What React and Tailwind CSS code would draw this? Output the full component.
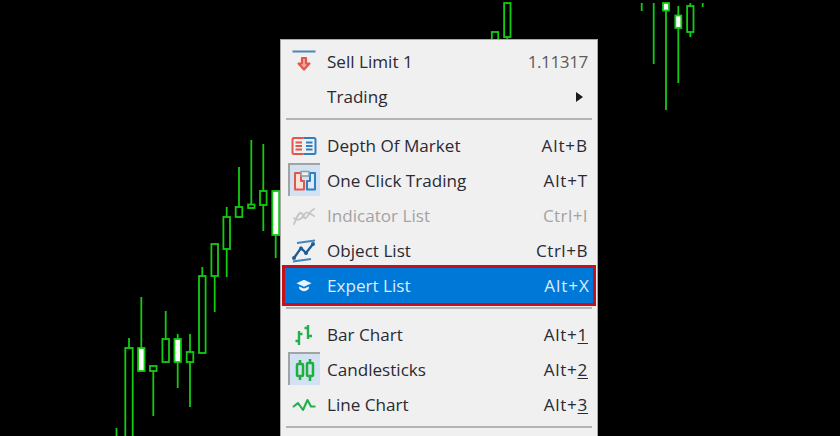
const GREEN = "#12cc12";

// x, wick top, wick bottom, body top, body bottom, white body, half width
const candles = [
    [116.5, 428, 436],
    [129, 338, 436, 348, 440, false, 3.7],
    [141.3, 297, 371, 348, 371, true, 3.2],
    [153.3, 366, 416, 366, 371, false, 3.3],
    [165.7, 311, 362, 339, 362, false, 3.3],
    [177.7, 334, 388, 339, 362, true, 3.2],
    [190, 334, 407, 352, 362, false, 3.3],
    [202.3, 267, 353, 276, 353, false, 3.3],
    [214.7, 244, 312, 244, 276, false, 3.3],
    [226.7, 207, 277, 217, 249, false, 3.3],
    [239, 167, 217, 207, 217, false, 3.3],
    [251.3, 140, 208, 204.5, 208, false, 3.2],
    [263.3, 144, 231, 191, 205, false, 3.3],
    [275.7, 191, 258, 191, 235, true, 3.4],
    [495, 32, 48, 32, 48, false, 3.2],
    [507.3, 3, 39, 3, 37, false, 3.2],
    [641.7, 3, 11],
    [653.7, 3, 64],
    [666, 3, 110, 3, 10.5, true, 3],
    [678.3, 6, 83, 15.5, 28, true, 3],
    [690.3, 3, 37, 6, 32, false, 3.2],
    [702.7, 3, 7],
];

function Chart() {
    return (
        <svg className="absolute inset-0" width="840" height="436" viewBox="0 0 840 436">
            {candles.map(([x, top, bottom, bodyTop, bodyBottom, white, half], i) => (
                <g key={i}>
                    <line x1={x} x2={x} y1={top} y2={bottom} stroke={GREEN} strokeWidth="1.8" />
                    {bodyTop !== undefined && (
                        <rect
                            x={x - half}
                            y={bodyTop}
                            width={half * 2}
                            height={bodyBottom - bodyTop}
                            fill={white ? "#ffffff" : "#000000"}
                            stroke={GREEN}
                            strokeWidth="1.8"
                        />
                    )}
                </g>
            ))}
        </svg>
    );
}

function SellLimitIcon() {
    return (
        <svg width="26" height="24" viewBox="0 0 26 24" fill="none">
            <path d="M1.500 1.500H24.500" stroke="#4a86b8" strokeWidth="2" />
            <path d="M11 8H15V13.500H18.500L13 19.500L7.500 13.500H11Z" fill="#f3a79d" stroke="#e2574c" strokeWidth="2.200" strokeLinejoin="round" />
        </svg>
    );
}

function DepthIcon() {
    return (
        <svg width="26" height="20" viewBox="0 0 26 20" fill="none" strokeWidth="2">
            <path d="M12.500 2H3a1.500 1.500 0 0 0-1.500 1.500v13A1.500 1.500 0 0 0 3 18h9.500" stroke="#e2574c" />
            <path d="M12.500 2H23a1.500 1.500 0 0 1 1.500 1.500v13A1.500 1.500 0 0 1 23 18H12.500" stroke="#2f7fc1" />
            <path d="M4.500 6.500H11M4.500 10H11M4.500 13.500H11" stroke="#e2574c" />
            <path d="M15 6.500H21.500M15 10H21.500M15 13.500H21.500" stroke="#2f7fc1" />
        </svg>
    );
}

function OneClickIcon() {
    return (
        <svg width="24" height="21" viewBox="0 0 24 21" fill="none" strokeWidth="2" strokeLinejoin="round">
            <path d="M2 3H8V11H11V19.500H2Z" fill="#fbe3dc" stroke="#e2574c" />
            <path d="M22 3V19.500H14V11H17V3Z" fill="#dcebf7" stroke="#2f7fc1" />
            <path d="M8 1.500H16V6H8Z" fill="#eef1f4" stroke="#8f9aa5" strokeWidth="1.500" />
        </svg>
    );
}

function IndicatorIcon() {
    return (
        <svg width="24" height="22" viewBox="0 0 24 22" fill="none" stroke="#c4c4c4" strokeWidth="1.800" strokeLinecap="round">
            <path d="M2 19C5 12 6 8 9 8S11 15 14 13 17 6 22 4" />
            <path d="M2 13C6 16 9 15 12 10S16 8 22 11" />
        </svg>
    );
}

function ObjectIcon() {
    return (
        <svg width="26" height="24" viewBox="0 0 26 24" fill="none">
            <path d="M6 4L24 1.500M2 22.500L20 20" stroke="#3f86bd" strokeWidth="2" />
            <path d="M3 19L10 9L15 14L22 5" stroke="#1f5f95" strokeWidth="2.400" />
            <circle cx="3" cy="19" r="2" fill="#1f5f95" />
            <circle cx="10" cy="9.500" r="2" fill="#1f5f95" />
            <circle cx="15" cy="14" r="2" fill="#1f5f95" />
            <circle cx="22" cy="5" r="2" fill="#1f5f95" />
        </svg>
    );
}

function ExpertIcon() {
    return (
        <svg width="16" height="13" viewBox="0 0 18 14" fill="#e6f2fc">
            <path d="M9 0.500L17.500 4.500L9 8.500L0.500 4.500Z" />
            <path d="M3.500 8L9 10.500L14.500 8V10.500C13 12.800 11 13.500 9 13.500S5 12.800 3.500 10.500Z" />
        </svg>
    );
}

function BarChartIcon() {
    return (
        <svg width="20" height="22" viewBox="0 0 20 22" fill="none" stroke="#22b04a" strokeWidth="2.400">
            <path d="M5 7V21M1.500 17H5M5 10H8.500" />
            <path d="M14 1V15M10.500 4H14M14 12H18" />
        </svg>
    );
}

function CandlesIcon() {
    return (
        <svg width="20" height="24" viewBox="0 0 20 24" fill="none" stroke="#1faf3c" strokeWidth="2.500">
            <path d="M5 2V6M5 18V22M15 1V5M15 18V23" />
            <rect x="2" y="6" width="6" height="12" rx="1" />
            <rect x="12" y="5" width="6" height="13" rx="1" />
        </svg>
    );
}

function LineChartIcon() {
    return (
        <svg width="24" height="14" viewBox="0 0 24 14" fill="none" stroke="#22b04a" strokeWidth="2.100" strokeLinejoin="round">
            <path d="M1 9L6 5L11 12L15.500 2L19 8.500H23.500" />
        </svg>
    );
}

function Shortcut({ prefix, digit }) {
    return (
        <span className="tracking-[0.7px]">
            {prefix}
            <span className="underline underline-offset-2">{digit}</span>
        </span>
    );
}

function MenuRow({ icon, label, right, checked, disabled, arrow }) {
    return (
        <div className={`flex h-[35px] items-center pr-[9px] ${disabled ? "text-[#a3a3a3]" : "text-[#2a2a34]"}`}>
            <div className="flex h-[35px] w-[46px] shrink-0 items-center justify-center">
                {checked ? (
                    <div className="mr-[1px] mb-[2px] flex h-[33px] w-[32px] items-center justify-center border-t-2 border-l-2 border-[#a3a3a3] bg-[#d2e2f2]">
                        {icon}
                    </div>
                ) : icon}
            </div>
            <span className="flex-1">{label}</span>
            {arrow && <span className="mr-[5px] h-0 w-0 border-y-[5.5px] border-l-[7px] border-y-transparent border-l-[#1c1c1c]" />}
            {right}
        </div>
    );
}

function Separator() {
    return <div className="mx-[5px] mt-[4px] mb-[8px] h-[2px] bg-[#b4b4b4]" />;
}

export default function App() {
    return (
        <div className="relative h-[436px] w-[840px] overflow-hidden bg-black">
            <Chart />

            {/* CONTEXT MENU */}
            <div
                className="absolute top-[39px] left-[280px] h-[400px] w-[318px] border border-[#a8a8a8] bg-[#f0f0f0] pt-[4px] text-[17.1px] leading-none font-medium"
                style={{ fontFamily: '"Open Sans", "Noto Sans", sans-serif' }}
            >
                <MenuRow icon={<SellLimitIcon />} label="Sell Limit 1" right={<span className="tracking-[-0.4px] text-[#5c5c5c]">1.11317</span>} />
                <MenuRow label="Trading" arrow />
                <Separator />
                <MenuRow icon={<DepthIcon />} label="Depth Of Market" right={<span className="tracking-[0.9px]">Alt+B</span>} />
                <MenuRow icon={<OneClickIcon />} label="One Click Trading" right={<span className="tracking-[0.8px]">Alt+T</span>} checked />
                <MenuRow icon={<IndicatorIcon />} label="Indicator List" right={<span className="tracking-[0.4px]">Ctrl+I</span>} disabled />
                <MenuRow icon={<ObjectIcon />} label="Object List" right={<span className="tracking-[0.5px]">Ctrl+B</span>} />
                <div className="mx-[4px] flex h-[35px] items-center bg-[#0078d7] pr-[3px] text-[#dcecfa] outline-[3px] outline-[#c80f1c]">
                    <div className="flex w-[42px] shrink-0 items-center justify-center pr-[4px]">
                        <ExpertIcon />
                    </div>
                    <span className="flex-1">Expert List</span>
                    <span className="tracking-[1px]">Alt+X</span>
                </div>
                <Separator />
                <MenuRow icon={<BarChartIcon />} label="Bar Chart" right={<Shortcut prefix="Alt+" digit="1" />} />
                <MenuRow icon={<CandlesIcon />} label="Candlesticks" right={<Shortcut prefix="Alt+" digit="2" />} checked />
                <MenuRow icon={<LineChartIcon />} label="Line Chart" right={<Shortcut prefix="Alt+" digit="3" />} />
                <Separator />
            </div>
        </div>
    );
}
